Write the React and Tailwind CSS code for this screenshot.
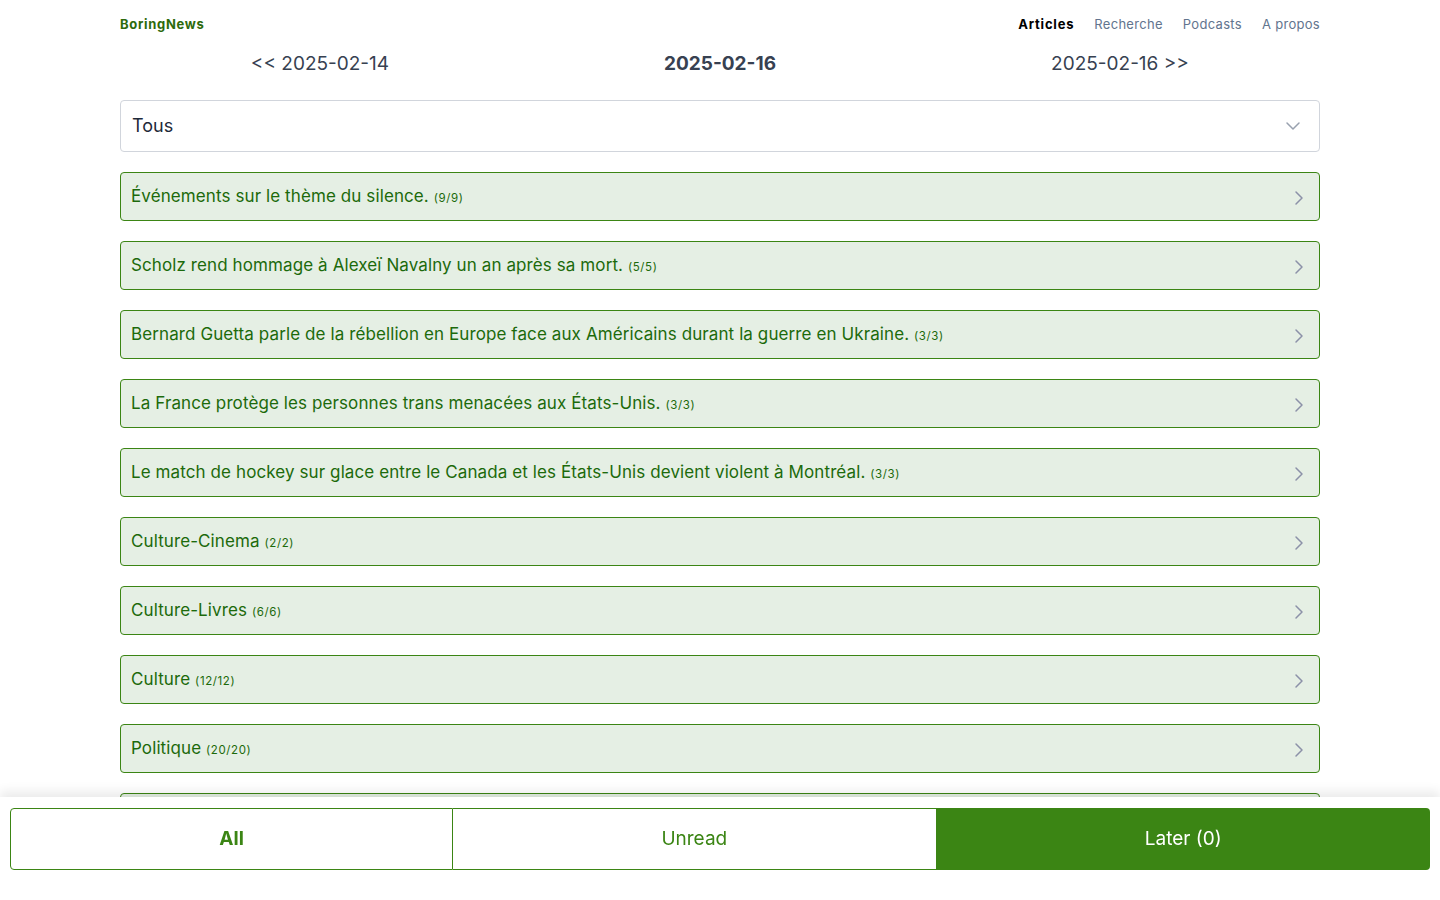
import { ChevronDown, ChevronRight } from "lucide-react";

const topics = [
  { title: "Événements sur le thème du silence.", count: "9/9" },
  { title: "Scholz rend hommage à Alexeï Navalny un an après sa mort.", count: "5/5" },
  {
    title:
      "Bernard Guetta parle de la rébellion en Europe face aux Américains durant la guerre en Ukraine.",
    count: "3/3",
  },
  { title: "La France protège les personnes trans menacées aux États-Unis.", count: "3/3" },
  {
    title:
      "Le match de hockey sur glace entre le Canada et les États-Unis devient violent à Montréal.",
    count: "3/3",
  },
  { title: "Culture-Cinema", count: "2/2" },
  { title: "Culture-Livres", count: "6/6" },
  { title: "Culture", count: "12/12" },
  { title: "Politique", count: "20/20" },
  { title: "International", count: "14/14" },
  { title: "Société", count: "9/9" },
];

const App = () => {
  return (
    <div className="min-h-screen bg-white font-['Inter',sans-serif] text-gray-700">
      <div className="max-w-[1200px] mx-auto pb-32">
        <header className="flex justify-between items-center h-[49px]">
          <span className="text-[13px] font-bold text-[#2d6a0c] tracking-[0.7px]">BoringNews</span>
          <nav className="flex gap-5 text-[13px] tracking-[0.3px]">
            <a className="font-bold text-black tracking-[0.8px]">Articles</a>
            <a className="text-slate-500">Recherche</a>
            <a className="text-slate-500">Podcasts</a>
            <a className="text-slate-500">A propos</a>
          </nav>
        </header>
        <div className="grid grid-cols-3 text-[19px] text-[#374151] h-[28px] items-center mt-px">
          <a className="text-center">&lt;&lt; 2025-02-14</a>
          <span className="text-center font-bold">2025-02-16</span>
          <a className="text-center">2025-02-16 &gt;&gt;</a>
        </div>
        <div className="mt-[22px] h-[52px] border border-gray-300 rounded flex items-center justify-between pl-[11px] pr-[14px]">
          <span className="text-[18px] text-gray-800 -mt-px">Tous</span>
          <ChevronDown size={24} className="text-gray-400" strokeWidth={1.5} />
        </div>
        <div className="mt-5 flex flex-col gap-5">
          {topics.map((t) => (
            <div
              key={t.title}
              className="h-[49px] border border-[#3b8514] rounded bg-[#e5efe4] flex items-center justify-between pl-[10px] pr-[8px]"
            >
              <span className="text-[17px] text-[#1c6a0b] tracking-[0.1px]">
                {t.title} <span className="text-[11.5px] tracking-[0.6px]">({t.count})</span>
              </span>
              <ChevronRight size={24} className="text-[#8c91a8] mt-[3px]" strokeWidth={1.5} />
            </div>
          ))}
        </div>
      </div>
      <div className="fixed bottom-0 left-0 right-0 bg-white shadow-[0_-6px_10px_rgba(0,0,0,0.08)] px-[10px] pt-[11px] pb-[30px]">
        <div className="flex h-[62px] text-[19px]">
          <button className="flex-auto px-[208px] border border-[#3b8514] rounded-l font-bold text-[#3b8514]">All</button>
          <button className="flex-auto px-[208px] border-y border-r border-[#3b8514] text-[#3b8514]">Unread</button>
          <button className="flex-auto px-[208px] bg-[#3b8514] rounded-r text-white">Later (0)</button>
        </div>
      </div>
    </div>
  );
};

export default App;
